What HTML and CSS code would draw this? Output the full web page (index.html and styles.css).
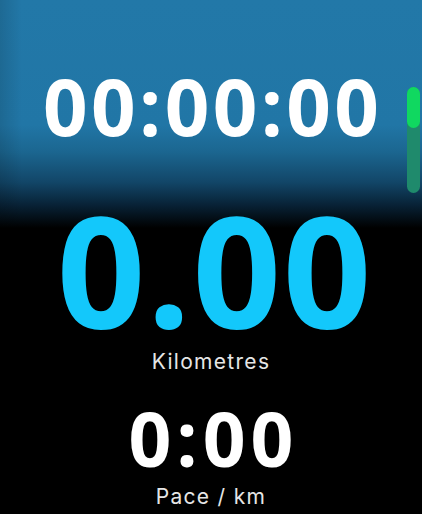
FILE: index.html
```html
<!DOCTYPE html>
<html lang="en">
<head>
<meta charset="utf-8">
<title>Workout</title>
<link rel="stylesheet" href="styles.css">
</head>
<body>
<main class="screen">
  <section class="header">
    <div class="elapsed">00:00:00</div>
    <div class="scrollbar"><div class="thumb"></div></div>
  </section>
  <section class="metric distance">
    <div class="value cyan">0.00</div>
    <div class="label">Kilometres</div>
  </section>
  <section class="metric pace">
    <div class="value small">0:00</div>
    <div class="label">Pace / km</div>
  </section>
</main>
</body>
</html>
```

FILE: styles.css
```css
html, body {
  margin: 0;
  padding: 0;
  background: #000;
}
body {
  width: 422px;
  height: 514px;
  overflow: hidden;
  font-family: Inter, "Noto Sans", sans-serif;
  color: #fff;
}
.screen {
  position: relative;
  width: 422px;
  height: 514px;
  display: flex;
  flex-direction: column;
  align-items: center;
  background:
    linear-gradient(to right, rgba(0,0,0,0.12) 0, rgba(0,0,0,0) 22px),
    linear-gradient(to bottom, #2278a8 0, #2176a6 125px, #1b6690 152px, #124668 182px, #082236 205px, #000 228px);
}
.header {
  width: 100%;
  padding-top: 67px;
  display: flex;
  justify-content: center;
}
.elapsed {
  font-family: "Open Sans", Inter, sans-serif;
  font-size: 78px;
  line-height: 78px;
  font-weight: 700;
  letter-spacing: 3.4px;
  margin-right: -3.4px;
  color: #fff;
}
.scrollbar {
  position: absolute;
  left: 407px;
  top: 87px;
  width: 13px;
  height: 106px;
  border-radius: 7px;
  background: #1f8a6c;
}
.thumb {
  width: 13px;
  height: 41px;
  border-radius: 7px;
  background: #10d860;
}
.metric {
  display: flex;
  flex-direction: column;
  align-items: center;
}
.distance {
  margin-top: 45px;
  padding-left: 6px;
}
.value {
  font-family: "Open Sans", Inter, sans-serif;
  font-weight: 700;
  color: #fff;
}
.value.cyan {
  font-size: 155px;
  line-height: 155px;
  letter-spacing: 1.5px;
  margin-right: -1.5px;
  color: #13c8fb;
}
.value.small {
  font-size: 75px;
  line-height: 75px;
  letter-spacing: 5px;
  margin-right: -5px;
}
.label {
  font-size: 21px;
  line-height: 21px;
  font-weight: 400;
  letter-spacing: 1.3px;
  color: #e6e6e6;
}
.distance .label {
  margin-top: 6px;
  margin-left: -6px;
}
.pace {
  margin-top: 29px;
}
.pace .label {
  margin-top: 10px;
}
```
